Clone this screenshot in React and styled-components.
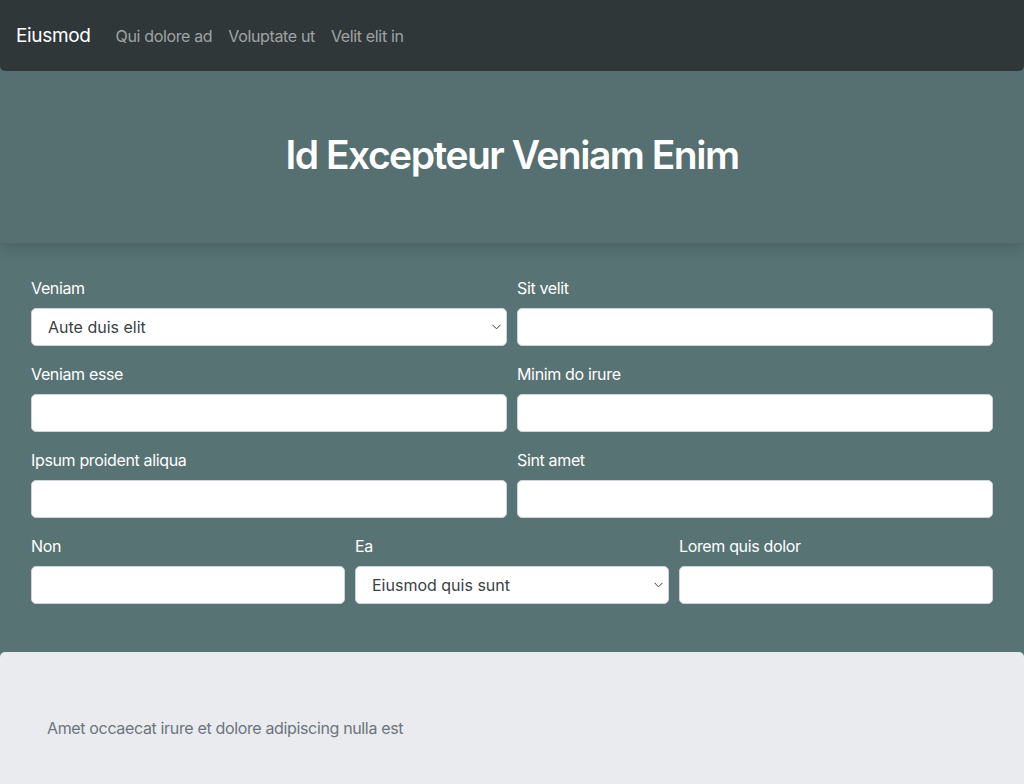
import React from "react";
import styled, { createGlobalStyle } from "styled-components";

const Global = createGlobalStyle`
  html, body { margin: 0; padding: 0; }
  body {
    background: #577374;
    font-family: Inter, "Noto Sans", "Liberation Sans", sans-serif;
    color: #212529;
    letter-spacing: -0.35px;
    -webkit-font-smoothing: antialiased;
  }
  * { box-sizing: border-box; }
`;

const Page = styled.div`
  display: flex;
  flex-direction: column;
`;

const NavBar = styled.nav`
  height: 71px;
  background: #2f3739;
  border-radius: 0 0 5px 5px;
  display: flex;
  align-items: center;
  padding: 0 16px;
  position: relative;
  z-index: 2;
`;

const Brand = styled.a`
  color: #fff;
  font-size: 19px;
  margin-right: 25px;
  text-decoration: none;
`;

const NavLink = styled.a`
  color: rgba(255, 255, 255, 0.55);
  font-size: 16px;
  margin-right: 16px;
  text-decoration: none;
`;

const Hero = styled.header`
  height: 172px;
  background: #566f71;
  display: flex;
  align-items: center;
  justify-content: center;
  padding-bottom: 6px;
  box-shadow: 0 4px 14px rgba(0, 0, 0, 0.16);
  position: relative;
  z-index: 1;
`;

const Title = styled.h1`
  margin: 0;
  color: #fff;
  font-size: 39px;
  font-weight: 600;
  letter-spacing: -1.5px;
`;

const Form = styled.form`
  padding: 33px 31px 48px;
  display: flex;
  flex-direction: column;
  gap: 16px;
`;

const Row = styled.div`
  display: grid;
  grid-template-columns: repeat(${(p) => p.cols}, 1fr);
  gap: 10px;
`;

const Field = styled.div`
  display: flex;
  flex-direction: column;
`;

const Label = styled.label`
  color: #fff;
  font-size: 16px;
  font-weight: 400;
  line-height: 24px;
  margin-bottom: 8px;
`;

const Input = styled.input`
  height: 38px;
  width: 100%;
  border: 1px solid #ced4da;
  border-radius: 5px;
  background: #fff;
  font: inherit;
  font-size: 16px;
  padding: 0 16px;
`;

const SelectWrap = styled.div`
  position: relative;
`;

const Select = styled.select`
  appearance: none;
  height: 38px;
  width: 100%;
  border: 1px solid #ced4da;
  border-radius: 5px;
  background: #fff;
  font: inherit;
  font-size: 16px;
  color: #3a3f44;
  padding: 0 16px;
`;

const Chevron = styled.svg`
  position: absolute;
  right: 6px;
  top: 16px;
  width: 9px;
  height: 6px;
  pointer-events: none;
`;

const Footer = styled.footer`
  background: #e9ebee;
  border-radius: 5px 5px 0 0;
  padding: 64px 47px 44px;
  color: #6c757d;
  font-size: 16px;
  line-height: 24px;
  height: 134px;
`;

const SelectField = ({ label, value }) => (
  <Field>
    <Label>{label}</Label>
    <SelectWrap>
      <Select defaultValue={value}>
        <option>{value}</option>
      </Select>
      <Chevron viewBox="0 0 9 6">
        <path d="M0.5 0.8 L4.5 4.8 L8.5 0.8" fill="none" stroke="#343a40" strokeWidth="1" />
      </Chevron>
    </SelectWrap>
  </Field>
);

const TextField = ({ label }) => (
  <Field>
    <Label>{label}</Label>
    <Input type="text" />
  </Field>
);

export default function App() {
  return (
    <Page>
      <Global />
      <NavBar>
        <Brand>Eiusmod</Brand>
        <NavLink>Qui dolore ad</NavLink>
        <NavLink>Voluptate ut</NavLink>
        <NavLink>Velit elit in</NavLink>
      </NavBar>
      <Hero>
        <Title>Id Excepteur Veniam Enim</Title>
      </Hero>
      <Form>
        <Row cols={2}>
          <SelectField label="Veniam" value="Aute duis elit" />
          <TextField label="Sit velit" />
        </Row>
        <Row cols={2}>
          <TextField label="Veniam esse" />
          <TextField label="Minim do irure" />
        </Row>
        <Row cols={2}>
          <TextField label="Ipsum proident aliqua" />
          <TextField label="Sint amet" />
        </Row>
        <Row cols={3}>
          <TextField label="Non" />
          <SelectField label="Ea" value="Eiusmod quis sunt" />
          <TextField label="Lorem quis dolor" />
        </Row>
      </Form>
      <Footer>Amet occaecat irure et dolore adipiscing nulla est</Footer>
    </Page>
  );
}
